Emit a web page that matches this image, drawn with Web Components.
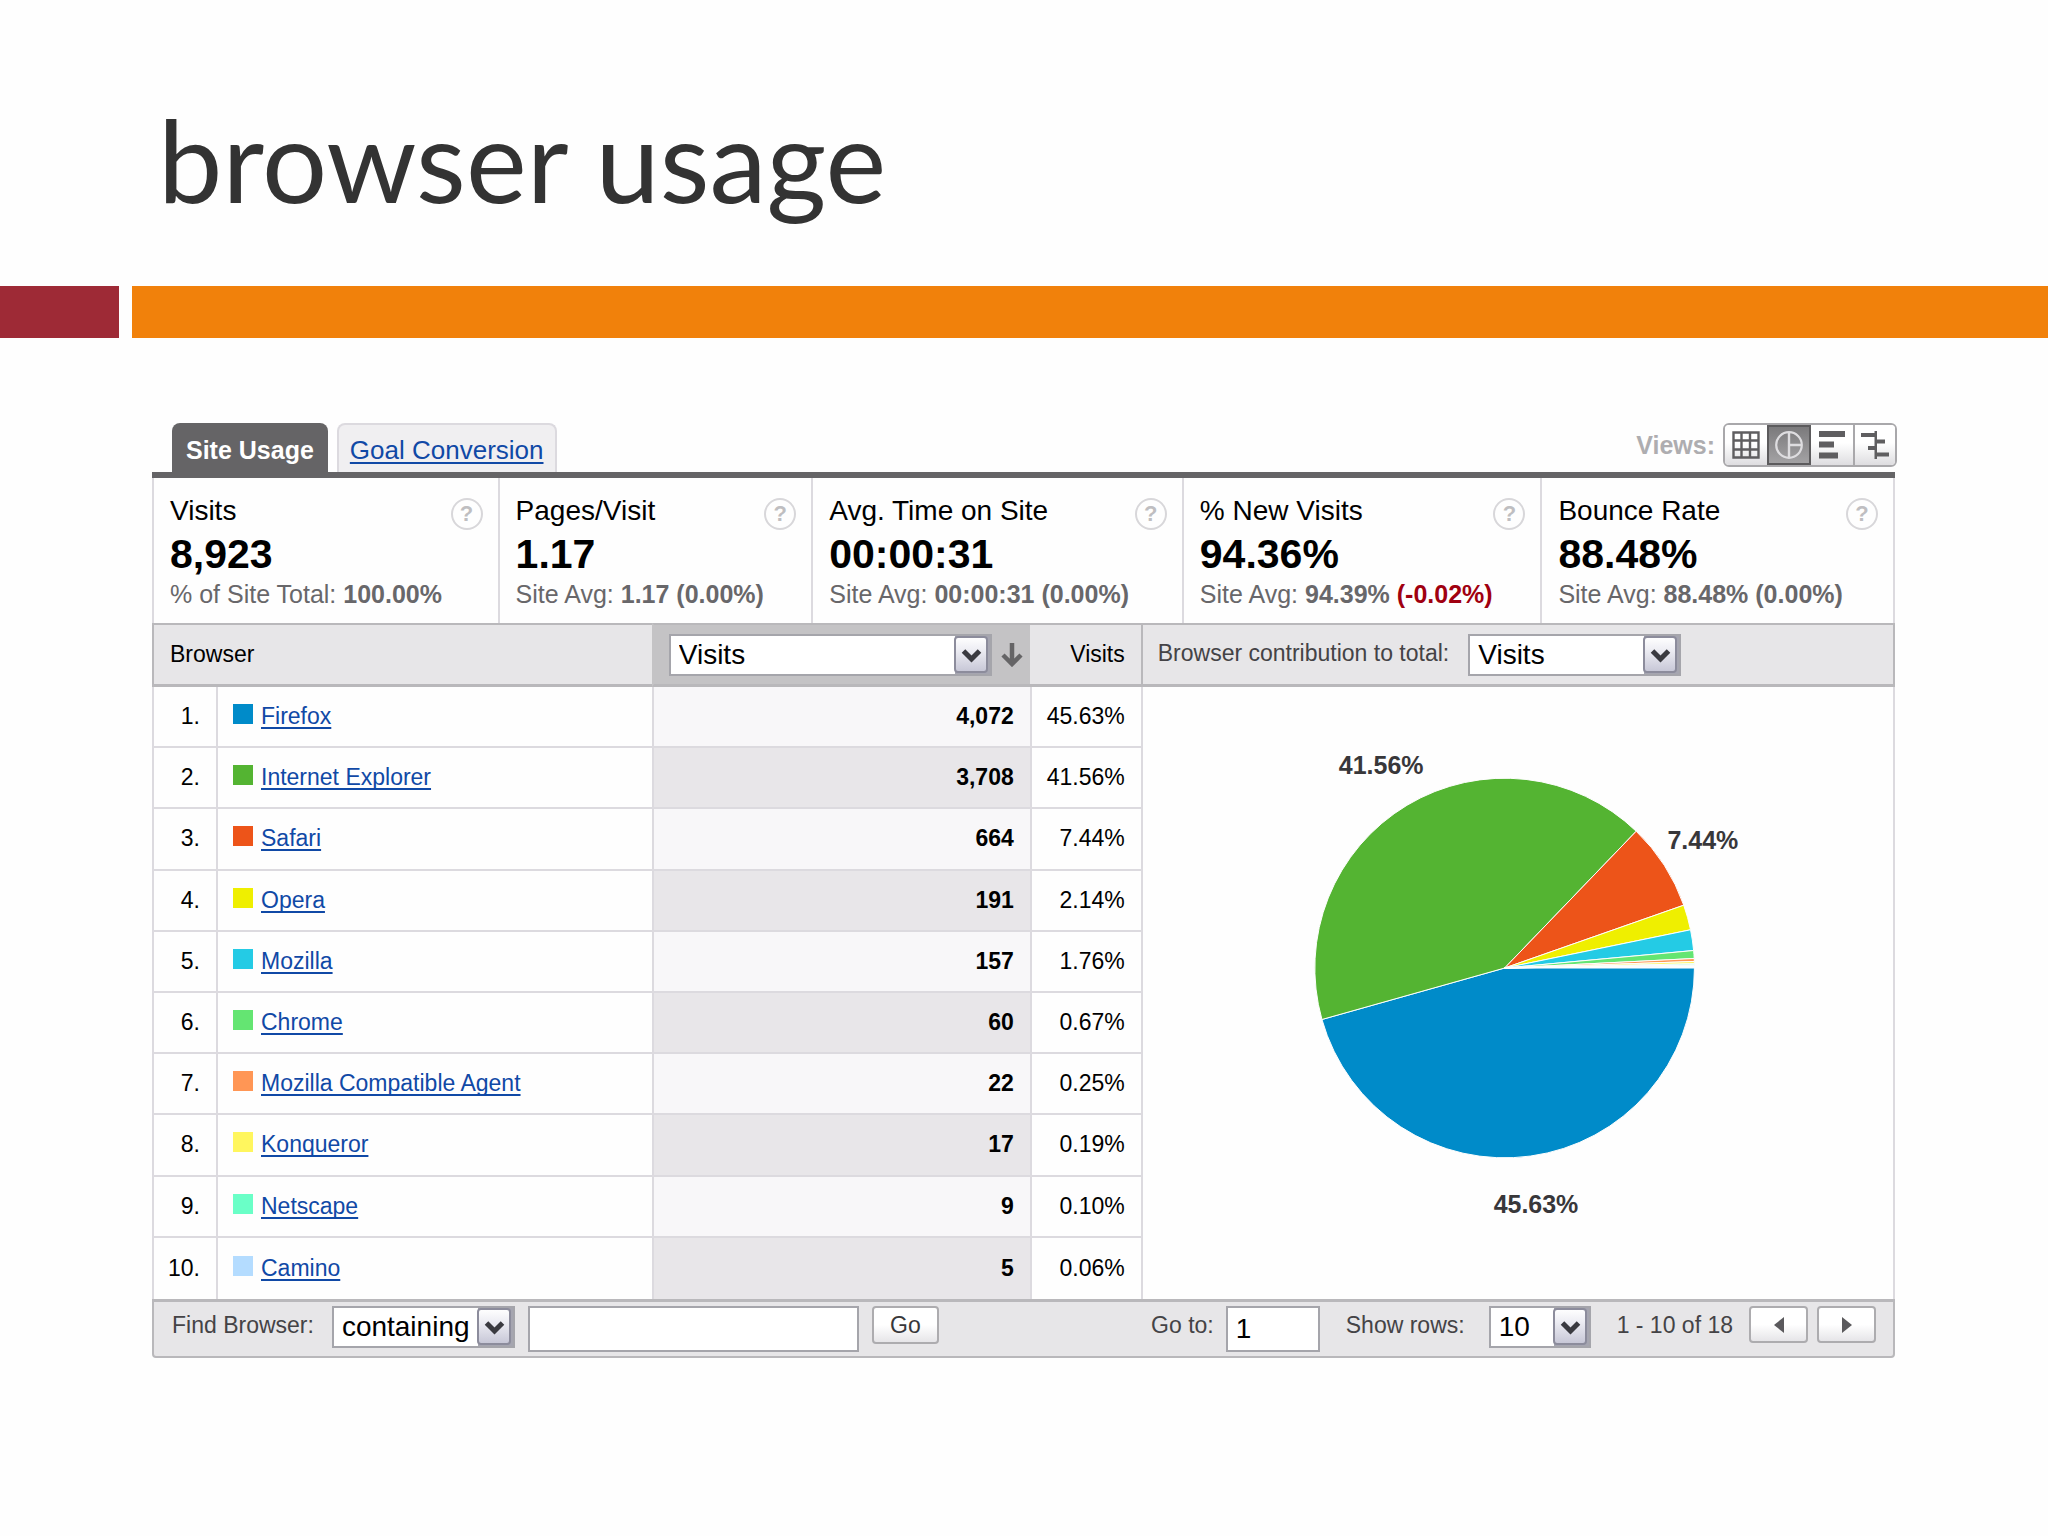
<!DOCTYPE html>
<html lang="en">
<head>
<meta charset="utf-8">
<title>browser usage</title>
<style>
  body { margin: 0; background: #fefefe; font-family: "Liberation Sans", Arial, sans-serif; color: #000; }
</style>
</head>
<body>
<slide-heading>browser usage</slide-heading>
<usage-report></usage-report>

<template id="slide-heading">
  <style>
    :host { display: block; }
    h1 { margin: 0; padding: 92px 158px 62px; font: 400 115px/132px Lato, sans-serif; color: #333; }
    .bars { display: grid; grid-template-columns: 119px 1fr; gap: 13px; height: 52px; }
    .red { background: #9e2a36; }
    .orange { background: #f1810b; }
  </style>
  <h1><slot></slot></h1>
  <div class="bars"><div class="red"></div><div class="orange"></div></div>
</template>

<template id="usage-report">
  <style>
    :host { display: block; margin: 85px 153px 0 152px; }
    .metrics { display: grid; grid-template-columns: 346fr 314fr 371fr 359fr 353fr; border-right: 2px solid #dcdadf; }
    em { font-style: normal; color: #a00010; }
  </style>
  <report-tabs></report-tabs>
  <div class="metrics">
    <metric-card><span slot="label">Visits</span><span slot="value">8,923</span><span slot="note">% of Site Total: <b>100.00%</b></span></metric-card>
    <metric-card><span slot="label">Pages/Visit</span><span slot="value">1.17</span><span slot="note">Site Avg: <b>1.17 (0.00%)</b></span></metric-card>
    <metric-card><span slot="label">Avg. Time on Site</span><span slot="value">00:00:31</span><span slot="note">Site Avg: <b>00:00:31 (0.00%)</b></span></metric-card>
    <metric-card><span slot="label">% New Visits</span><span slot="value">94.36%</span><span slot="note">Site Avg: <b>94.39% <em>(-0.02%)</em></b></span></metric-card>
    <metric-card><span slot="label">Bounce Rate</span><span slot="value">88.48%</span><span slot="note">Site Avg: <b>88.48% (0.00%)</b></span></metric-card>
  </div>
  <browser-table></browser-table>
  <report-footer></report-footer>
</template>

<template id="report-tabs">
  <style>
    :host { display: flex; align-items: flex-start; gap: 9px; padding-left: 20px; border-bottom: 6px solid #656466; font-size: 25px; font-weight: 700; }
    a { display: block; box-sizing: border-box; height: 49px; padding: 7px 14px 0; line-height: 41px; border-radius: 8px 8px 0 0; }
    .on { background: #656466; color: #fff; text-decoration: none; }
    .off { background: #f0eff1; border: 2px solid #dcdadf; border-bottom: 0; padding: 5px 11px 0; font-size: 26px; font-weight: 400; color: #1049a6; text-decoration: underline 2px; text-underline-offset: 3px; text-decoration-skip-ink: none; }
    .views { display: flex; align-items: center; gap: 8px; margin: 0 -2px 0 auto; color: #aeadb0; }
    .group { display: flex; border: 2px solid #a9a8ab; border-radius: 6px; overflow: hidden; }
    button { display: grid; place-items: center; width: 42px; height: 40px; padding: 0; border: 0; background: linear-gradient(#fff 45%, #dedde0); }
    button + button { border-left: 2px solid #a9a8ab; }
    button.sel { background: linear-gradient(#7b7a7c, #a3a2a4); border: 2px solid #5c5b5d; width: 44px; }
    button.sel + button { border-left: 0; }
    svg { display: block; width: 28px; height: 28px; }
  </style>
  <a class="on" href="#site-usage">Site Usage</a>
  <a class="off" href="#goal-conversion">Goal Conversion</a>
  <div class="views">
    <span>Views:</span>
    <div class="group">
      <button aria-label="Table view"><svg viewBox="0 0 28 28"><path d="M1.5 1.5h25v25h-25zM1.5 9.5h25M1.5 18.5h25M9.5 1.5v25M18 1.5v25" fill="none" stroke="#5f5e60" stroke-width="2.4"/></svg></button>
      <button class="sel" aria-label="Pie view"><svg viewBox="0 0 28 28"><path d="M14 1v26M14 14h13" stroke="#dedde0" stroke-width="2.4"/><circle cx="14" cy="14" r="12.8" fill="none" stroke="#dedde0" stroke-width="2.2"/></svg></button>
      <button aria-label="Bar view"><svg viewBox="0 0 28 28"><path d="M1 0h26v6H1zM1 10.500h15v6H1zM1 21.500h19v6H1z" fill="#5f5e60"/></svg></button>
      <button aria-label="Comparison view"><svg viewBox="0 0 28 28"><path d="M13.500 0h2.500v28h-2.500zM0 2h14v4H0zM15 8.500h9v4h-9zM7 15h8v4H7zM15 21.500h13v4H15z" fill="#5f5e60"/></svg></button>
    </div>
  </div>
</template>

<template id="metric-card">
  <style>
    :host { display: grid; grid-template-columns: 1fr 32px; align-items: start; box-sizing: border-box; padding: 15px 15px 13px 16px; border-left: 2px solid #dcdadf; white-space: nowrap; }
    .label { font-size: 28px; line-height: 36px; }
    .value { grid-column: 1 / 3; font-size: 41px; line-height: 48px; font-weight: 700; }
    .note { grid-column: 1 / 3; font-size: 25px; line-height: 32px; color: #68676a; }
    button { box-sizing: border-box; width: 32px; height: 32px; margin-top: 5px; padding: 0; border: 2px solid #d8d7da; border-radius: 50%; background: #fefefe; color: #bfbec1; font: 700 22px/28px "Liberation Sans", Arial, sans-serif; }
  </style>
  <div class="label"><slot name="label"></slot></div>
  <button>?</button>
  <div class="value"><slot name="value"></slot></div>
  <div class="note"><slot name="note"></slot></div>
</template>

<template id="pick-list">
  <style>
    :host { display: flex; font-size: 23px; color: #444346; }
    label { line-height: 38px; margin-right: var(--label-gap, 18px); white-space: nowrap; }
    .box { display: grid; box-sizing: border-box; flex: none; width: var(--box-width, 100%); height: 42px; border: 2px solid #a5a5ab; background: #fff; }
    select { grid-area: 1 / 1; appearance: none; width: 100%; height: 38px; margin: 0; padding: 0 0 0 8px; border: 0; border-radius: 0; background: none; color: #000; font: 400 28px/38px "Liberation Sans", Arial, sans-serif; }
    svg { grid-area: 1 / 1; justify-self: end; display: block; width: 37px; height: 38px; pointer-events: none; }
  </style>
  <label for="pick"></label>
  <div class="box">
    <select id="pick"></select>
    <svg viewBox="0 0 37 38"><defs><linearGradient id="g" x1="0" y1="0" x2="0" y2="1"><stop offset="0" stop-color="#fff"/><stop offset=".35" stop-color="#eeeef4"/><stop offset="1" stop-color="#c6c6d6"/></linearGradient></defs><path d="M2 0h35v38H2z" fill="#a5a5b0"/><rect x="2" y="1" width="32" height="35" rx="3" fill="url(#g)" stroke="#8c8c9c" stroke-width="2"/><path d="M10.500 15l8 8 8-8" fill="none" stroke="#3a3a40" stroke-width="5"/></svg>
  </div>
</template>

<template id="browser-table">
  <style>
    :host { display: block; --line: #dcdadf; --edge: #b9b8bb; }
    table { width: 100%; table-layout: fixed; border-collapse: separate; border-spacing: 0; font-size: 23px; }
    th, td { box-sizing: border-box; padding: 0; font-weight: 400; text-align: left; }
    th { height: 64px; border-top: 2px solid var(--edge); border-bottom: 3px solid var(--edge); border-left: 2px solid var(--edge); background: #e7e6e8; }
    th:last-child { border-right: 2px solid var(--edge); }
    th.name { padding-left: 16px; }
    th.sort { background: #c4c3c5; border-left-color: #c4c3c5; }
    th.pct { padding-right: 16px; border-left: 0; text-align: right; }
    .tools { display: flex; align-items: center; gap: 9px; padding: 0 7px 0 15px; }
    .tools pick-list { flex: 1; }
    .tools svg { display: block; width: 22px; height: 24px; }
    th pick-list { --box-width: 213px; --label-gap: 19px; padding-left: 15px; }
    .tools pick-list { --box-width: 100%; --label-gap: 0; padding: 0; }
    td { height: 61px; border-left: 2px solid var(--line); border-bottom: 2px solid var(--line); }
    tbody tr:last-child td, td.chart { border-bottom: 0; }
    td.chart { border-right: 2px solid var(--line); vertical-align: top; }
    .rank, .pct, .num { text-align: right; padding-right: 16px; }
    .num { font-weight: 700; background: #f8f7f9; }
    tr:nth-child(even) .num { background: #e8e6e9; }
    .site { padding-left: 15px; }
    i { display: inline-block; width: 20px; height: 20px; margin-right: 8px; }
    a { color: #1049a6; text-decoration-thickness: 2px; text-underline-offset: 3px; text-decoration-skip-ink: none; }
  </style>
  <table>
    <colgroup><col style="width:64px"><col style="width:25%"><col style="width:378px"><col style="width:111px"><col></colgroup>
    <thead><tr>
      <th class="name" colspan="2">Browser</th>
      <th class="sort"><div class="tools"><pick-list name="Metric" value="Visits"></pick-list><svg viewBox="0 0 22 24"><path d="M11 0v21M2 12l9 9 9-9" fill="none" stroke="#656466" stroke-width="4.500"/></svg></div></th>
      <th class="pct">Visits</th>
      <th><pick-list label="Browser contribution to total:" value="Visits"></pick-list></th>
    </tr></thead>
    <tbody></tbody>
  </table>
</template>

<template id="pie-chart">
  <style>
    :host { display: block; }
    svg { display: block; width: 100%; height: 612px; }
    text { font: 700 25px "Liberation Sans", Arial, sans-serif; fill: #38373a; }
    path { stroke: #fefefe; stroke-width: 1; }
  </style>
  <svg viewBox="0 0 751 612" role="img" aria-label="Browser contribution to total">
    <g></g>
    <text x="196" y="87">41.56%</text>
    <text x="525" y="162">7.44%</text>
    <text x="351" y="526">45.63%</text>
  </svg>
</template>

<template id="report-footer">
  <style>
    :host { display: flex; align-items: flex-start; box-sizing: border-box; height: 59px; padding: 4px 17px 0 18px; border: 2px solid #b9b8bb; border-top-width: 3px; border-radius: 0 0 4px 4px; background: #e7e6e8; color: #444346; font-size: 23px; line-height: 38px; white-space: nowrap; }
    .find { --box-width: 183px; }
    .rows { --box-width: 102px; --label-gap: 24px; margin: 0 26px; }
    .goto { margin-left: auto; display: flex; gap: 12px; }
    input { box-sizing: border-box; height: 46px; margin: 0; padding: 0 8px; border: 2px solid #a5a5ab; border-radius: 0; background: #fff; color: #000; font: 400 28px "Liberation Sans", Arial, sans-serif; }
    .text { width: 331px; margin: 0 13px; }
    .page { width: 94px; }
    button { display: grid; place-items: center; box-sizing: border-box; width: 59px; height: 37px; padding: 0; border: 2px solid #adacaf; border-radius: 4px; background: linear-gradient(#fff 50%, #e6e5e8); color: #38373a; font: 400 23px "Liberation Sans", Arial, sans-serif; }
    .go { width: 67px; height: 38px; }
    .nav { display: flex; gap: 9px; margin-left: 16px; }
    svg { display: block; width: 10px; height: 16px; }
  </style>
  <pick-list class="find" label="Find Browser:" value="containing"></pick-list>
  <input class="text" type="text" aria-label="Browser name">
  <button class="go">Go</button>
  <div class="goto"><label for="page">Go to:</label><input class="page" id="page" type="text" value="1"></div>
  <pick-list class="rows" label="Show rows:" value="10"></pick-list>
  <span>1 - 10 of 18</span>
  <div class="nav">
    <button aria-label="Previous page"><svg viewBox="0 0 10 16"><path d="M10 0v16L0 8z" fill="#5a595c"/></svg></button>
    <button aria-label="Next page"><svg viewBox="0 0 10 16"><path d="M0 0v16l10-8z" fill="#5a595c"/></svg></button>
  </div>
</template>

<script>
  const BROWSERS = [
    ['Firefox', '4,072', '45.63%', '#008bc9'],
    ['Internet Explorer', '3,708', '41.56%', '#54b432'],
    ['Safari', '664', '7.44%', '#ed5419'],
    ['Opera', '191', '2.14%', '#efef00'],
    ['Mozilla', '157', '1.76%', '#24cbe5'],
    ['Chrome', '60', '0.67%', '#64e572'],
    ['Mozilla Compatible Agent', '22', '0.25%', '#ff9655'],
    ['Konqueror', '17', '0.19%', '#fff65e'],
    ['Netscape', '9', '0.10%', '#6affc7'],
    ['Camino', '5', '0.06%', '#b4dcff']
  ];

  class Part extends HTMLElement {
    constructor() {
      super();
      const source = document.getElementById(this.localName);
      this.attachShadow({ mode: 'open' }).append(source.content.cloneNode(true));
    }
  }

  class PickList extends Part {
    connectedCallback() {
      const label = this.shadowRoot.querySelector('label');
      const select = this.shadowRoot.querySelector('select');
      if (this.hasAttribute('label')) label.textContent = this.getAttribute('label');
      else { label.remove(); select.setAttribute('aria-label', this.getAttribute('name')); }
      select.replaceChildren(new Option(this.getAttribute('value')));
    }
  }

  class BrowserTable extends Part {
    connectedCallback() {
      this.shadowRoot.querySelector('tbody').innerHTML = BROWSERS.map(([name, visits, share, color], n) => `
        <tr><td class="rank">${n + 1}.</td>
        <td class="site"><i style="background:${color}"></i><a href="#${n + 1}">${name}</a></td>
        <td class="num">${visits}</td><td class="pct">${share}</td>
        ${n ? '' : `<td class="chart" rowspan="${BROWSERS.length}"><pie-chart></pie-chart></td>`}</tr>`).join('');
    }
  }

  class PieChart extends Part {
    connectedCallback() {
      const cx = 362, cy = 281, r = 190;
      let from = 0;
      const point = share => {
        const angle = share / 100 * 2 * Math.PI;
        return `${cx + r * Math.cos(angle)} ${cy + r * Math.sin(angle)}`;
      };
      this.shadowRoot.querySelector('g').innerHTML = BROWSERS.map(([, , share, color]) => {
        const to = from + parseFloat(share);
        const d = `M${cx} ${cy}L${point(from)}A${r} ${r} 0 0 1 ${point(to)}Z`;
        from = to;
        return `<path d="${d}" fill="${color}"/>`;
      }).join('');
    }
  }

  customElements.define('pick-list', PickList);
  customElements.define('pie-chart', PieChart);
  customElements.define('browser-table', BrowserTable);
  for (const name of ['slide-heading', 'metric-card', 'report-tabs', 'report-footer', 'usage-report'])
    customElements.define(name, class extends Part {});
</script>
</body>
</html>
